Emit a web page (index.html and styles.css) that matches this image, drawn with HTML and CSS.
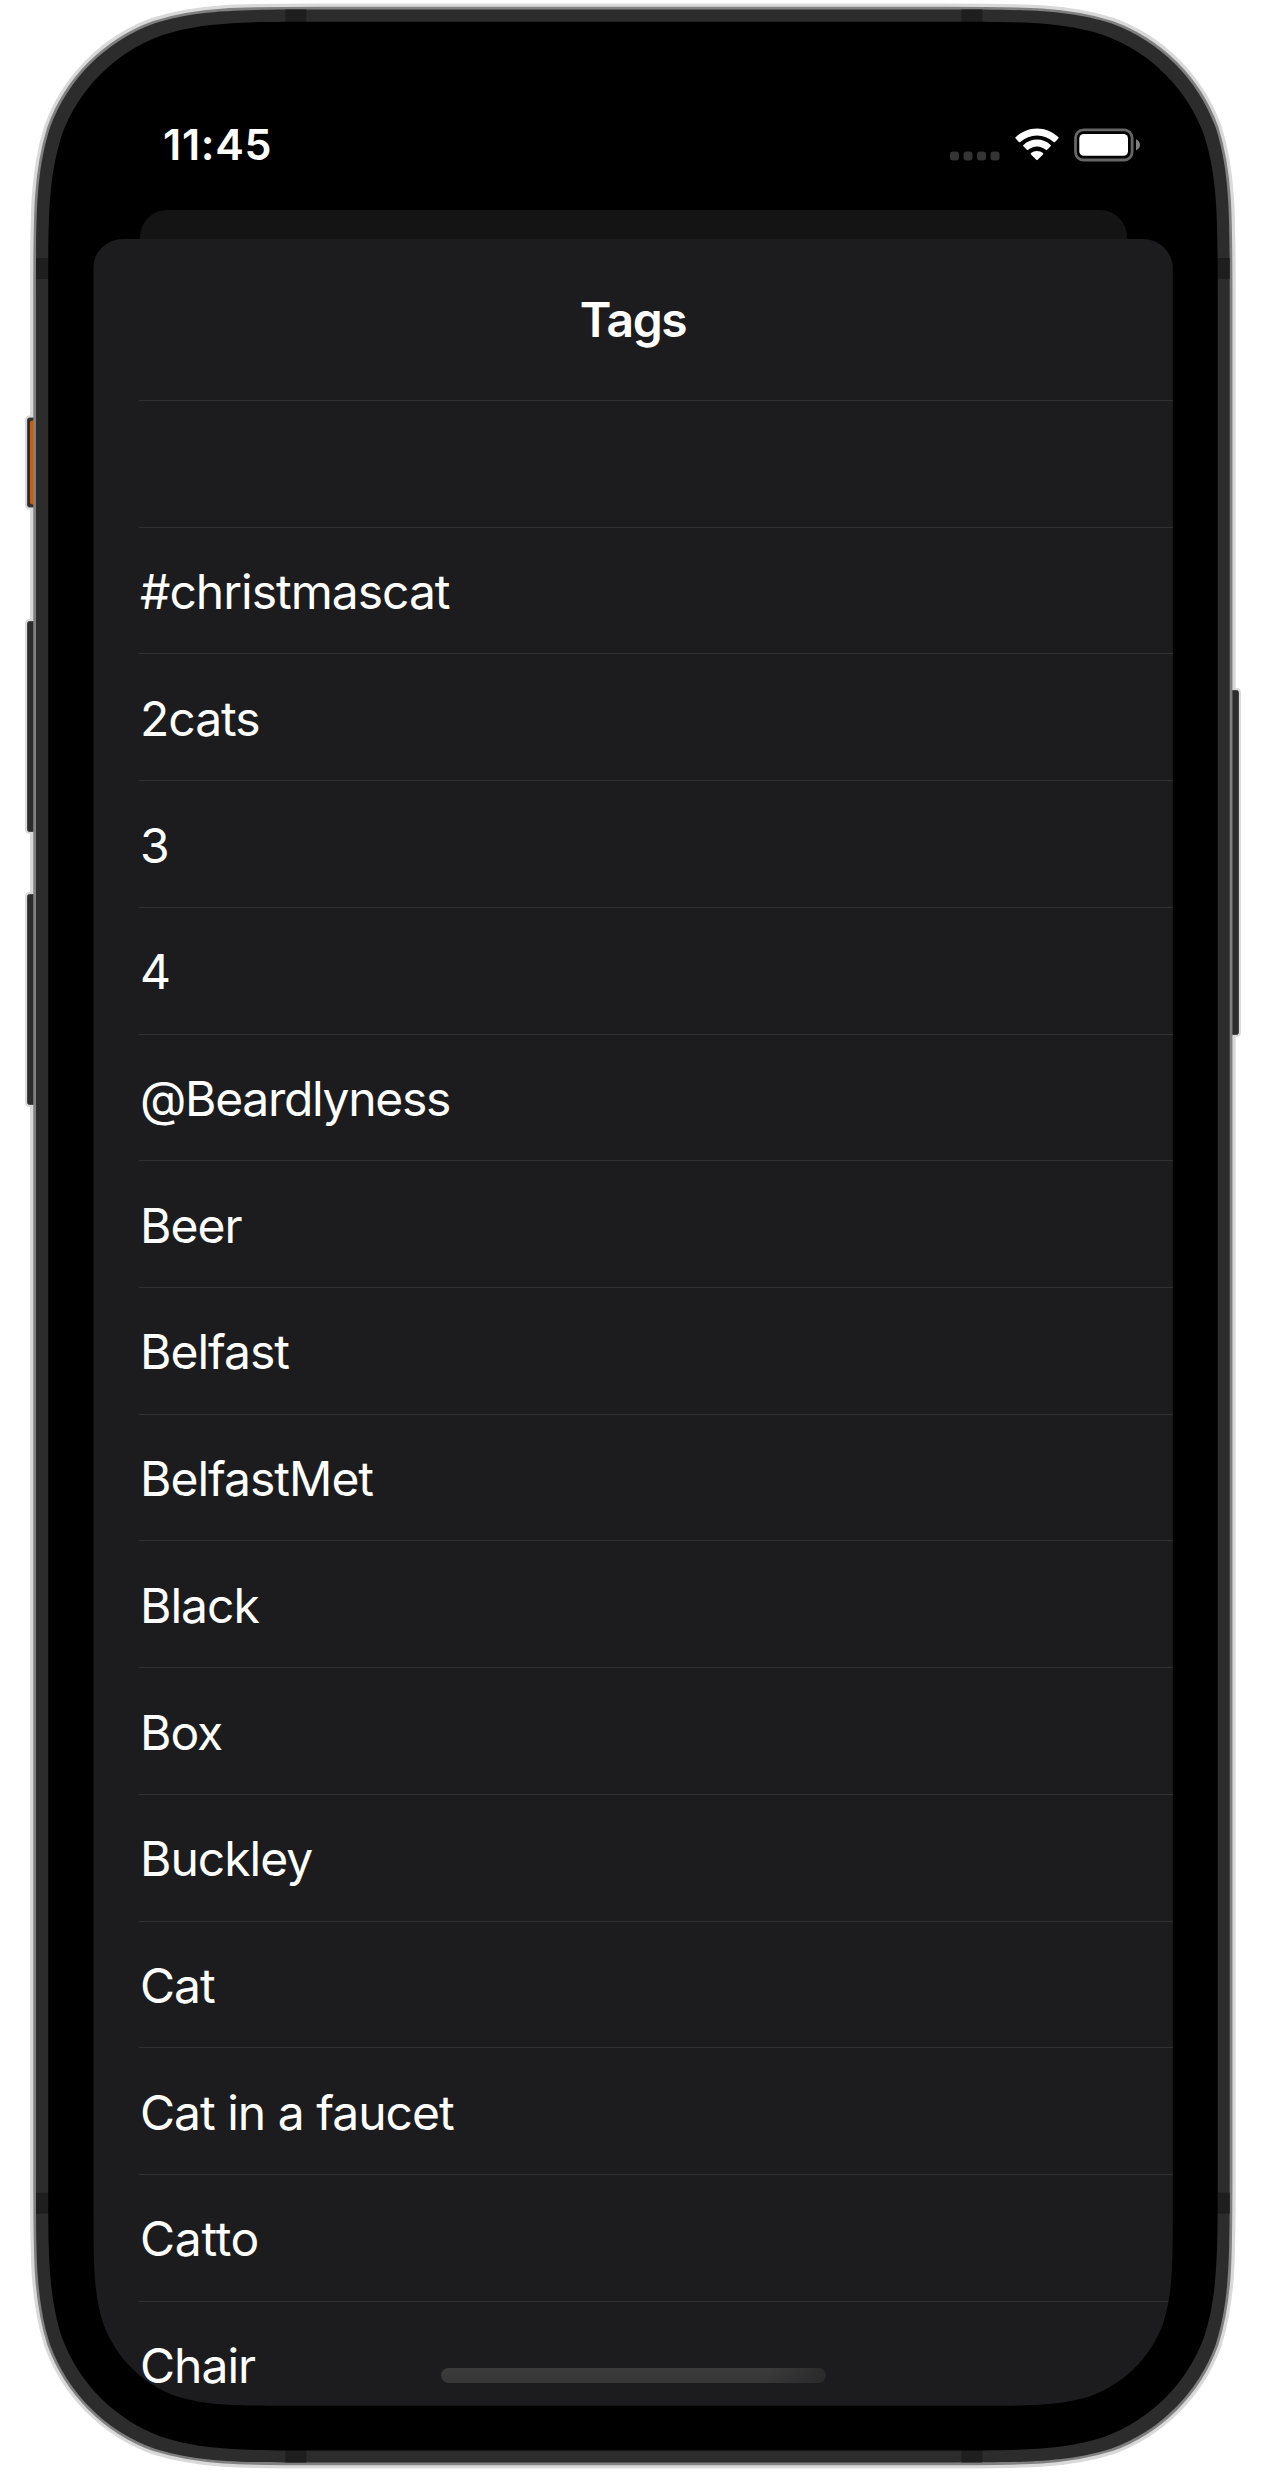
FILE: index.html
```
<!DOCTYPE html>
<html lang="en">
<head>
<meta charset="utf-8">
<title>Tags</title>
<link rel="stylesheet" href="styles.css">
</head>
<body>
<div class="phone">
  <svg class="frame" viewBox="0 0 1266 2472" aria-hidden="true">
    <defs>
      <path id="band" d="M321.900 9.500h621.900c82.400 0 123.500 0 167.800 14c48.400 17.600 86.500 55.700 104.100 104.100c14 44.300 14 85.400 14 167.800v1881.200c0 82.400 0 123.500-14 167.800c-17.600 48.400-55.700 86.500-104.100 104.100c-44.300 14-85.400 14-167.800 14h-621.900c-82.400 0-123.500 0-167.800-14c-48.400-17.600-86.500-55.700-104.100-104.100c-14-44.300-14-85.400-14-167.800v-1881.200c0-82.400 0-123.500 14-167.800c17.600-48.400 55.700-86.500 104.100-104.100c44.300-14 85.400-14 167.800-14z"/>
    </defs>
    <use href="#band" class="edge-light"/>
    <!-- side buttons -->
    <g class="button-halo">
      <rect x="27.500" y="418" width="14" height="89" rx="2"/>
      <rect x="27.500" y="621.500" width="14" height="210" rx="2"/>
      <rect x="27.500" y="894.500" width="14" height="210" rx="2"/>
      <rect x="1224" y="690.500" width="14.500" height="344" rx="2"/>
    </g>
    <g class="button">
      <rect x="27.500" y="418" width="14" height="89" rx="2"/>
      <rect x="27.500" y="621.500" width="14" height="210" rx="2"/>
      <rect x="27.500" y="894.500" width="14" height="210" rx="2"/>
      <rect x="1224" y="690.500" width="14.500" height="344" rx="2"/>
    </g>
    <rect class="mute" x="30" y="420.500" width="10" height="84" rx="2"/>
    <!-- metal band -->
    <use href="#band" class="edge-dark"/>
    <use href="#band" class="band"/>
    <g class="antenna">
      <rect x="285.300" y="9.500" width="21" height="13"/>
      <rect x="961.300" y="9.500" width="21" height="13"/>
      <rect x="285.300" y="2449.500" width="21" height="13"/>
      <rect x="961.300" y="2449.500" width="21" height="13"/>
      <rect x="36" y="258" width="13" height="21"/>
      <rect x="1216.700" y="258" width="13" height="21"/>
      <rect x="36" y="2192.700" width="13" height="21"/>
      <rect x="1216.700" y="2192.700" width="13" height="21"/>
    </g>
    <path d="M323.400 21.700h619.100c79.300 0 118.900 0 161.500 13.500c46.600 16.900 83.300 53.600 100.200 100.200c13.500 42.600 13.500 82.200 13.500 161.500v1878.400c0 79.300 0 118.900-13.500 161.500c-16.900 46.600-53.600 83.300-100.200 100.200c-42.600 13.500-82.200 13.500-161.500 13.500h-619.100c-79.300 0-118.900 0-161.500-13.500c-46.600-16.900-83.300-53.600-100.200-100.200c-13.500-42.600-13.500-82.200-13.500-161.500v-1878.400c0-79.300 0-118.900 13.500-161.500c16.900-46.600 53.600-83.300 100.200-100.200c42.600-13.500 82.200-13.500 161.500-13.500z"/>
  </svg>

  <main class="screen">
    <header class="status">
      <span class="time">11:45</span>
      <div class="indicators">
        <svg class="cellular" width="42" height="10" viewBox="0 0 42 10" aria-hidden="true">
          <rect x="0" y=".5" width="9" height="9" rx="3"/>
          <rect x="13.500" y=".5" width="9" height="9" rx="3"/>
          <rect x="27" y=".5" width="9" height="9" rx="3"/>
          <rect x="40.500" y=".5" width="9" height="9" rx="3"/>
        </svg>
        <svg class="wifi" width="44" height="34" viewBox="0 0 44 34" aria-hidden="true">
          <path d="M22 .5C30 .5 37.500 3.700 43.300 9.100Q44 9.900 43.300 10.600L40 13.900Q39.300 14.500 38.600 13.900C34 9.800 28.200 7.500 22 7.500S10 9.800 5.400 13.900Q4.700 14.500 4 13.900L.7 10.600Q0 9.900.7 9.100C6.500 3.700 14 .5 22 .5Z"/>
          <path d="M22 11.500C27.100 11.500 31.900 13.500 35.600 16.900Q36.300 17.600 35.600 18.300L32.100 21.800Q31.500 22.400 30.800 21.800C28.400 19.700 25.300 18.400 22 18.400S15.600 19.700 13.200 21.800Q12.500 22.400 11.900 21.800L8.400 18.300Q7.700 17.600 8.400 16.900C12.100 13.500 16.900 11.500 22 11.500Z"/>
          <path d="M22 22.900C24.300 22.900 26.400 23.700 28 25.100Q28.700 25.800 28 26.500L22.700 31.800Q22 32.500 21.300 31.800L16 26.500Q15.300 25.800 16 25.100C17.600 23.700 19.700 22.900 22 22.900Z"/>
        </svg>
        <svg class="battery" width="67" height="34" viewBox="0 0 67 34" aria-hidden="true">
          <rect class="shell" x="1.500" y="1.800" width="56.600" height="30.200" rx="8"/>
          <rect class="charge" x="5.300" y="6" width="48.700" height="21.700" rx="4.500"/>
          <path class="cap" d="M62 11.300c5.300 2.500 5.300 8.700 0 11.200z"/>
        </svg>
      </div>
    </header>
    <div class="sheet-behind"></div>
    <section class="sheet">
      <h1 class="title">Tags</h1>
      <ul class="tags">
        <li class="tag"></li>
        <li class="tag">#christmascat</li>
        <li class="tag">2cats</li>
        <li class="tag">3</li>
        <li class="tag">4</li>
        <li class="tag tag--tight">@Beardlyness</li>
        <li class="tag">Beer</li>
        <li class="tag">Belfast</li>
        <li class="tag">BelfastMet</li>
        <li class="tag">Black</li>
        <li class="tag">Box</li>
        <li class="tag">Buckley</li>
        <li class="tag">Cat</li>
        <li class="tag">Cat in a faucet</li>
        <li class="tag tag--loose">Catto</li>
        <li class="tag">Chair</li>
      </ul>
    </section>
    <div class="home-indicator"></div>
  </main>
</div>
</body>
</html>
```
FILE: styles.css
```
* { box-sizing: border-box; }

body {
  margin: 0;
  background: #fff;
  color: #fff;
  font-family: Inter, "Liberation Sans", sans-serif;
}

.phone {
  position: relative;
  width: 1266px;
  height: 2472px;
  padding: 67px 93px 0;
  overflow: hidden;
}

.frame {
  position: absolute;
  inset: 0;
  width: 1266px;
  height: 2472px;
}

.button-halo rect { fill: none; stroke: #d9d9d9; stroke-width: 5; }
.button rect { fill: #2c2c2c; stroke: #444; stroke-width: 1; }
.mute { fill: #d65a00; }
.edge-light { fill: none; stroke: #d9d9d9; stroke-width: 12; }
.edge-dark { fill: none; stroke: #808080; stroke-width: 5.500; }
.band { fill: #2c2c2c; }
.antenna { fill: #1e1e1e; }

.screen {
  position: relative;
  display: flex;
  flex-direction: column;
  height: 2338.700px;
  clip-path: path("M.5 0H1079.8V2140c0 57.2 0 85.8-9.7 116.6c-12.3 33.6-38.8 60.1-72.4 72.4c-30.8 9.7-59.4 9.7-116.6 9.7h-681.900c-57.2 0-85.8 0-116.6-9.7c-33.6-12.3-60.1-38.8-72.4-72.4c-9.700-30.800-9.700-59.400-9.700-116.600z");
}

.status {
  display: flex;
  justify-content: space-between;
  align-items: flex-start;
  height: 143px;
  padding: 51px 32px 0 70px;
}

.time {
  font-size: 43px;
  line-height: 52px;
  font-weight: 600;
  letter-spacing: .7px;
}

.indicators {
  display: flex;
  align-items: flex-start;
  padding-top: 10px;
}

.indicators svg { overflow: visible; }
.cellular { margin: 22.500px 22.500px 0 0; fill: #333; }
.wifi { margin-right: 15.500px; fill: #fff; }
.shell { fill: none; stroke: #666; stroke-width: 2.800; }
.charge { fill: #fff; }
.cap { fill: #808080; }

.sheet-behind {
  flex: none;
  height: 29px;
  margin: 0 46.500px;
  border-radius: 27px 27px 0 0;
  background: #141414;
}

.sheet {
  flex: 1;
  min-height: 0;
  overflow: hidden;
  border-radius: 30px 30px 0 0;
  background: #1c1c1e;
}

.title {
  height: 161px;
  margin: 0;
  padding-top: 52px;
  font-size: 48px;
  line-height: 58px;
  font-weight: 600;
  letter-spacing: -1.400px;
  text-align: center;
}

.tags {
  margin: 0;
  padding: 0 0 0 46px;
  list-style: none;
}

.tag {
  display: flex;
  align-items: center;
  height: 126.720px;
  padding: 3px 0 0 1px;
  border-top: 1px solid #313133;
  font-size: 48px;
  line-height: 58px;
  letter-spacing: -1px;
  white-space: pre;
}

.tag--tight { letter-spacing: -1.300px; }
.tag--loose { letter-spacing: -.300px; }

.home-indicator {
  position: absolute;
  left: 347.500px;
  bottom: 23px;
  width: 385.500px;
  height: 15px;
  border-radius: 8px;
  background:
    linear-gradient(100deg, transparent 84%, #2a2a2b),
    linear-gradient(#3c3c3c, #363637);
}
```
